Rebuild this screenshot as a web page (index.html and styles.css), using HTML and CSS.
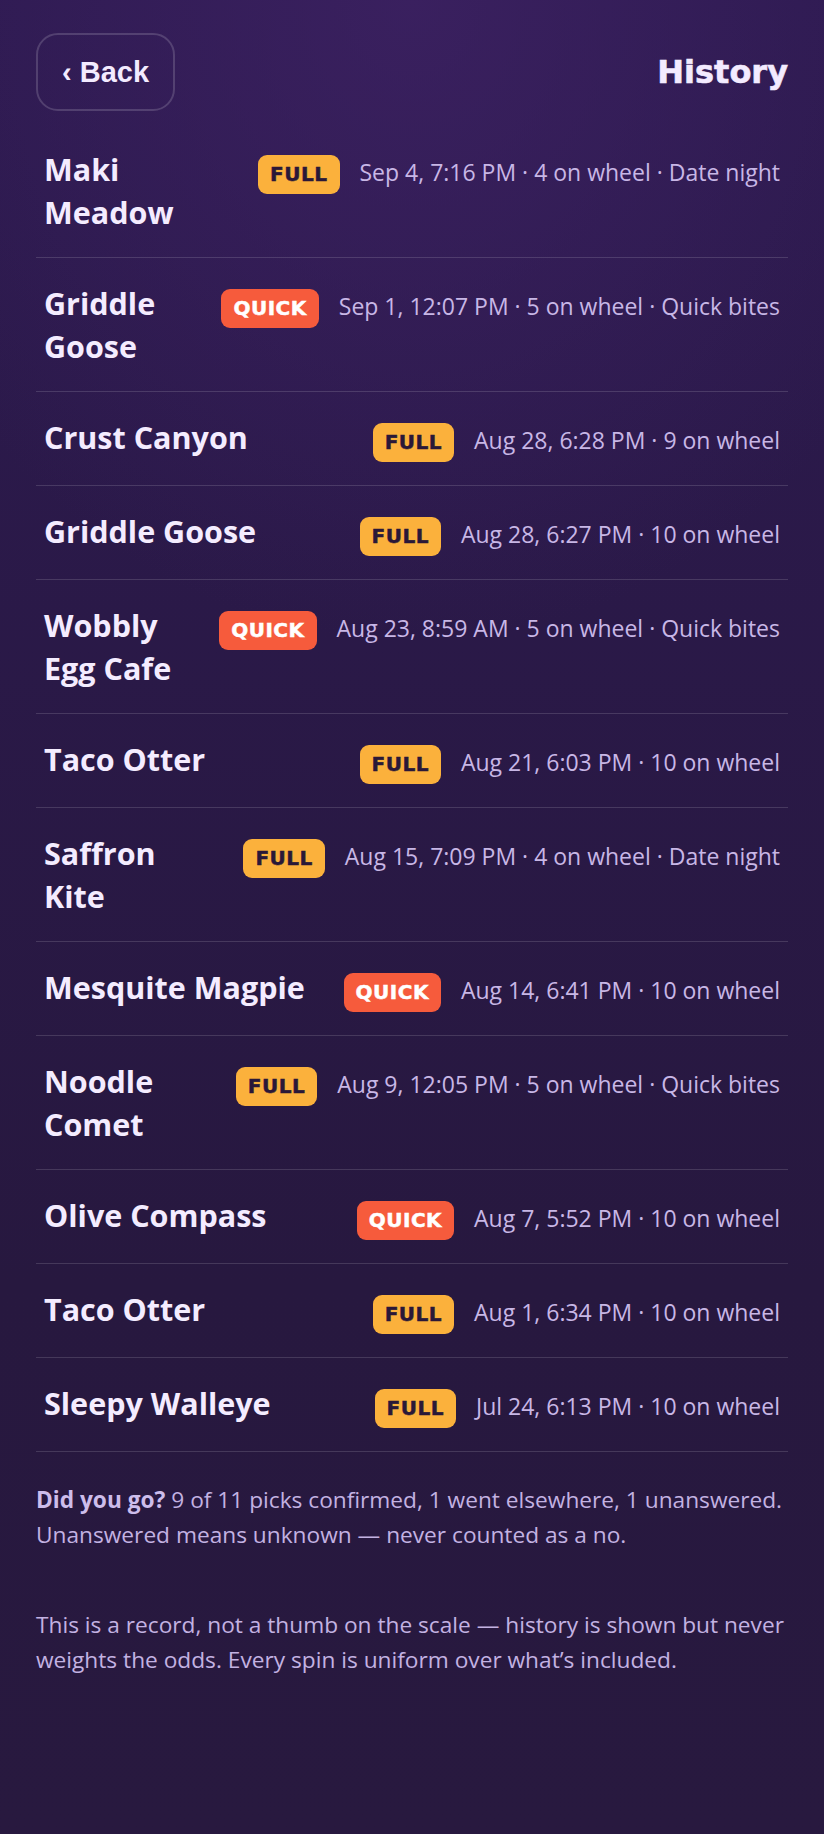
FILE: index.html
```html
<!DOCTYPE html>
<html lang="en">
<head>
  <meta charset="UTF-8">
  <title>History</title>
  <link rel="stylesheet" href="styles.css">
</head>
<body>

  <main class="page">
    <!-- Top bar -->
    <header class="topbar">
      <button class="back-btn">&lsaquo; Back</button>
      <h1 class="title">History</h1>
    </header>

    <!-- Past spins -->
    <ul class="history">
      <li class="entry">
        <span class="entry-name">Maki Meadow</span>
        <span class="entry-info">
          <span class="badge badge-full">FULL</span>
          <span class="entry-meta">Sep 4, 7:16 PM · 4 on wheel · Date night</span>
        </span>
      </li>
      <li class="entry">
        <span class="entry-name">Griddle Goose</span>
        <span class="entry-info">
          <span class="badge badge-quick">QUICK</span>
          <span class="entry-meta">Sep 1, 12:07 PM · 5 on wheel · Quick bites</span>
        </span>
      </li>
      <li class="entry">
        <span class="entry-name">Crust Canyon</span>
        <span class="entry-info">
          <span class="badge badge-full">FULL</span>
          <span class="entry-meta">Aug 28, 6:28 PM · 9 on wheel</span>
        </span>
      </li>
      <li class="entry">
        <span class="entry-name">Griddle Goose</span>
        <span class="entry-info">
          <span class="badge badge-full">FULL</span>
          <span class="entry-meta">Aug 28, 6:27 PM · 10 on wheel</span>
        </span>
      </li>
      <li class="entry">
        <span class="entry-name">Wobbly Egg Cafe</span>
        <span class="entry-info">
          <span class="badge badge-quick">QUICK</span>
          <span class="entry-meta">Aug 23, 8:59 AM · 5 on wheel · Quick bites</span>
        </span>
      </li>
      <li class="entry">
        <span class="entry-name">Taco Otter</span>
        <span class="entry-info">
          <span class="badge badge-full">FULL</span>
          <span class="entry-meta">Aug 21, 6:03 PM · 10 on wheel</span>
        </span>
      </li>
      <li class="entry">
        <span class="entry-name">Saffron Kite</span>
        <span class="entry-info">
          <span class="badge badge-full">FULL</span>
          <span class="entry-meta">Aug 15, 7:09 PM · 4 on wheel · Date night</span>
        </span>
      </li>
      <li class="entry">
        <span class="entry-name">Mesquite Magpie</span>
        <span class="entry-info">
          <span class="badge badge-quick">QUICK</span>
          <span class="entry-meta">Aug 14, 6:41 PM · 10 on wheel</span>
        </span>
      </li>
      <li class="entry">
        <span class="entry-name">Noodle Comet</span>
        <span class="entry-info">
          <span class="badge badge-full">FULL</span>
          <span class="entry-meta">Aug 9, 12:05 PM · 5 on wheel · Quick bites</span>
        </span>
      </li>
      <li class="entry">
        <span class="entry-name">Olive Compass</span>
        <span class="entry-info">
          <span class="badge badge-quick">QUICK</span>
          <span class="entry-meta">Aug 7, 5:52 PM · 10 on wheel</span>
        </span>
      </li>
      <li class="entry">
        <span class="entry-name">Taco Otter</span>
        <span class="entry-info">
          <span class="badge badge-full">FULL</span>
          <span class="entry-meta">Aug 1, 6:34 PM · 10 on wheel</span>
        </span>
      </li>
      <li class="entry">
        <span class="entry-name">Sleepy Walleye</span>
        <span class="entry-info">
          <span class="badge badge-full">FULL</span>
          <span class="entry-meta">Jul 24, 6:13 PM · 10 on wheel</span>
        </span>
      </li>
    </ul>

    <p class="note"><strong>Did you go?</strong> 9 of 11 picks confirmed, 1 went elsewhere, 1 unanswered. Unanswered means unknown — never counted as a no.</p>
    <p class="note note-fair">This is a record, not a thumb on the scale — history is shown but never weights the odds. Every spin is uniform over what’s included.</p>
  </main>

</body>
</html>
```

FILE: styles.css
```css
html, body {
  margin: 0;
  padding: 0;
  min-height: 100%;
  font-family: 'Open Sans', 'Noto Sans', sans-serif;
  color: #f3ebff;
  background:
    radial-gradient(ellipse 70% 35% at 50% 0%, rgba(62, 34, 100, 0.75), rgba(62, 34, 100, 0) 100%),
    linear-gradient(to bottom, #2d1a50, #27183f 70%, #28193f);
}

body {
  min-height: 1834px;
}

.page {
  padding: 33px 36px 60px;
}

.topbar {
  display: flex;
  justify-content: space-between;
  align-items: center;
  margin-bottom: 13px;
}

.back-btn {
  font-family: 'Liberation Sans', Arial, sans-serif;
  font-weight: 700;
  font-size: 29px;
  line-height: 34px;
  color: #f3ebff;
  background: transparent;
  border: 2px solid rgba(255, 255, 255, 0.16);
  border-radius: 22px;
  padding: 20px 24px;
  cursor: pointer;
}

.title {
  margin: 0;
  font-family: 'DejaVu Sans', sans-serif;
  font-weight: 700;
  font-size: 32px;
  color: #f3ebff;
  -webkit-text-stroke: 0.6px #f3ebff;
}

.history {
  list-style: none;
  margin: 0;
  padding: 0;
}

.entry {
  display: flex;
  justify-content: space-between;
  align-items: baseline;
  gap: 28px;
  padding: 24px 8px 23px;
  border-bottom: 1px solid rgba(255, 255, 255, 0.14);
}

.entry-name {
  font-weight: 700;
  font-size: 30.5px;
  line-height: 43px;
  color: #f4ecff;
}

.entry-info {
  display: flex;
  align-items: baseline;
  gap: 20px;
  flex-shrink: 0;
  white-space: nowrap;
}

.badge {
  font-family: 'DejaVu Sans', sans-serif;
  font-weight: 700;
  font-size: 20px;
  line-height: 22px;
  letter-spacing: 0.5px;
  padding: 8px 12px 9px;
  border-radius: 9px;
  -webkit-text-stroke: 0.5px currentColor;
}

.badge-full {
  background: #fbb13c;
  color: #2a1838;
}

.badge-quick {
  background: #f65b3c;
  color: #ffffff;
}

.entry-meta {
  font-size: 23px;
  color: #c8b7e6;
}

.note {
  margin: 30px 0 0;
  font-size: 22.7px;
  line-height: 35px;
  color: #c3b2e2;
}

.note strong {
  font-weight: 700;
  color: #cdbdeb;
}

.note-fair {
  margin-top: 55px;
}
```
